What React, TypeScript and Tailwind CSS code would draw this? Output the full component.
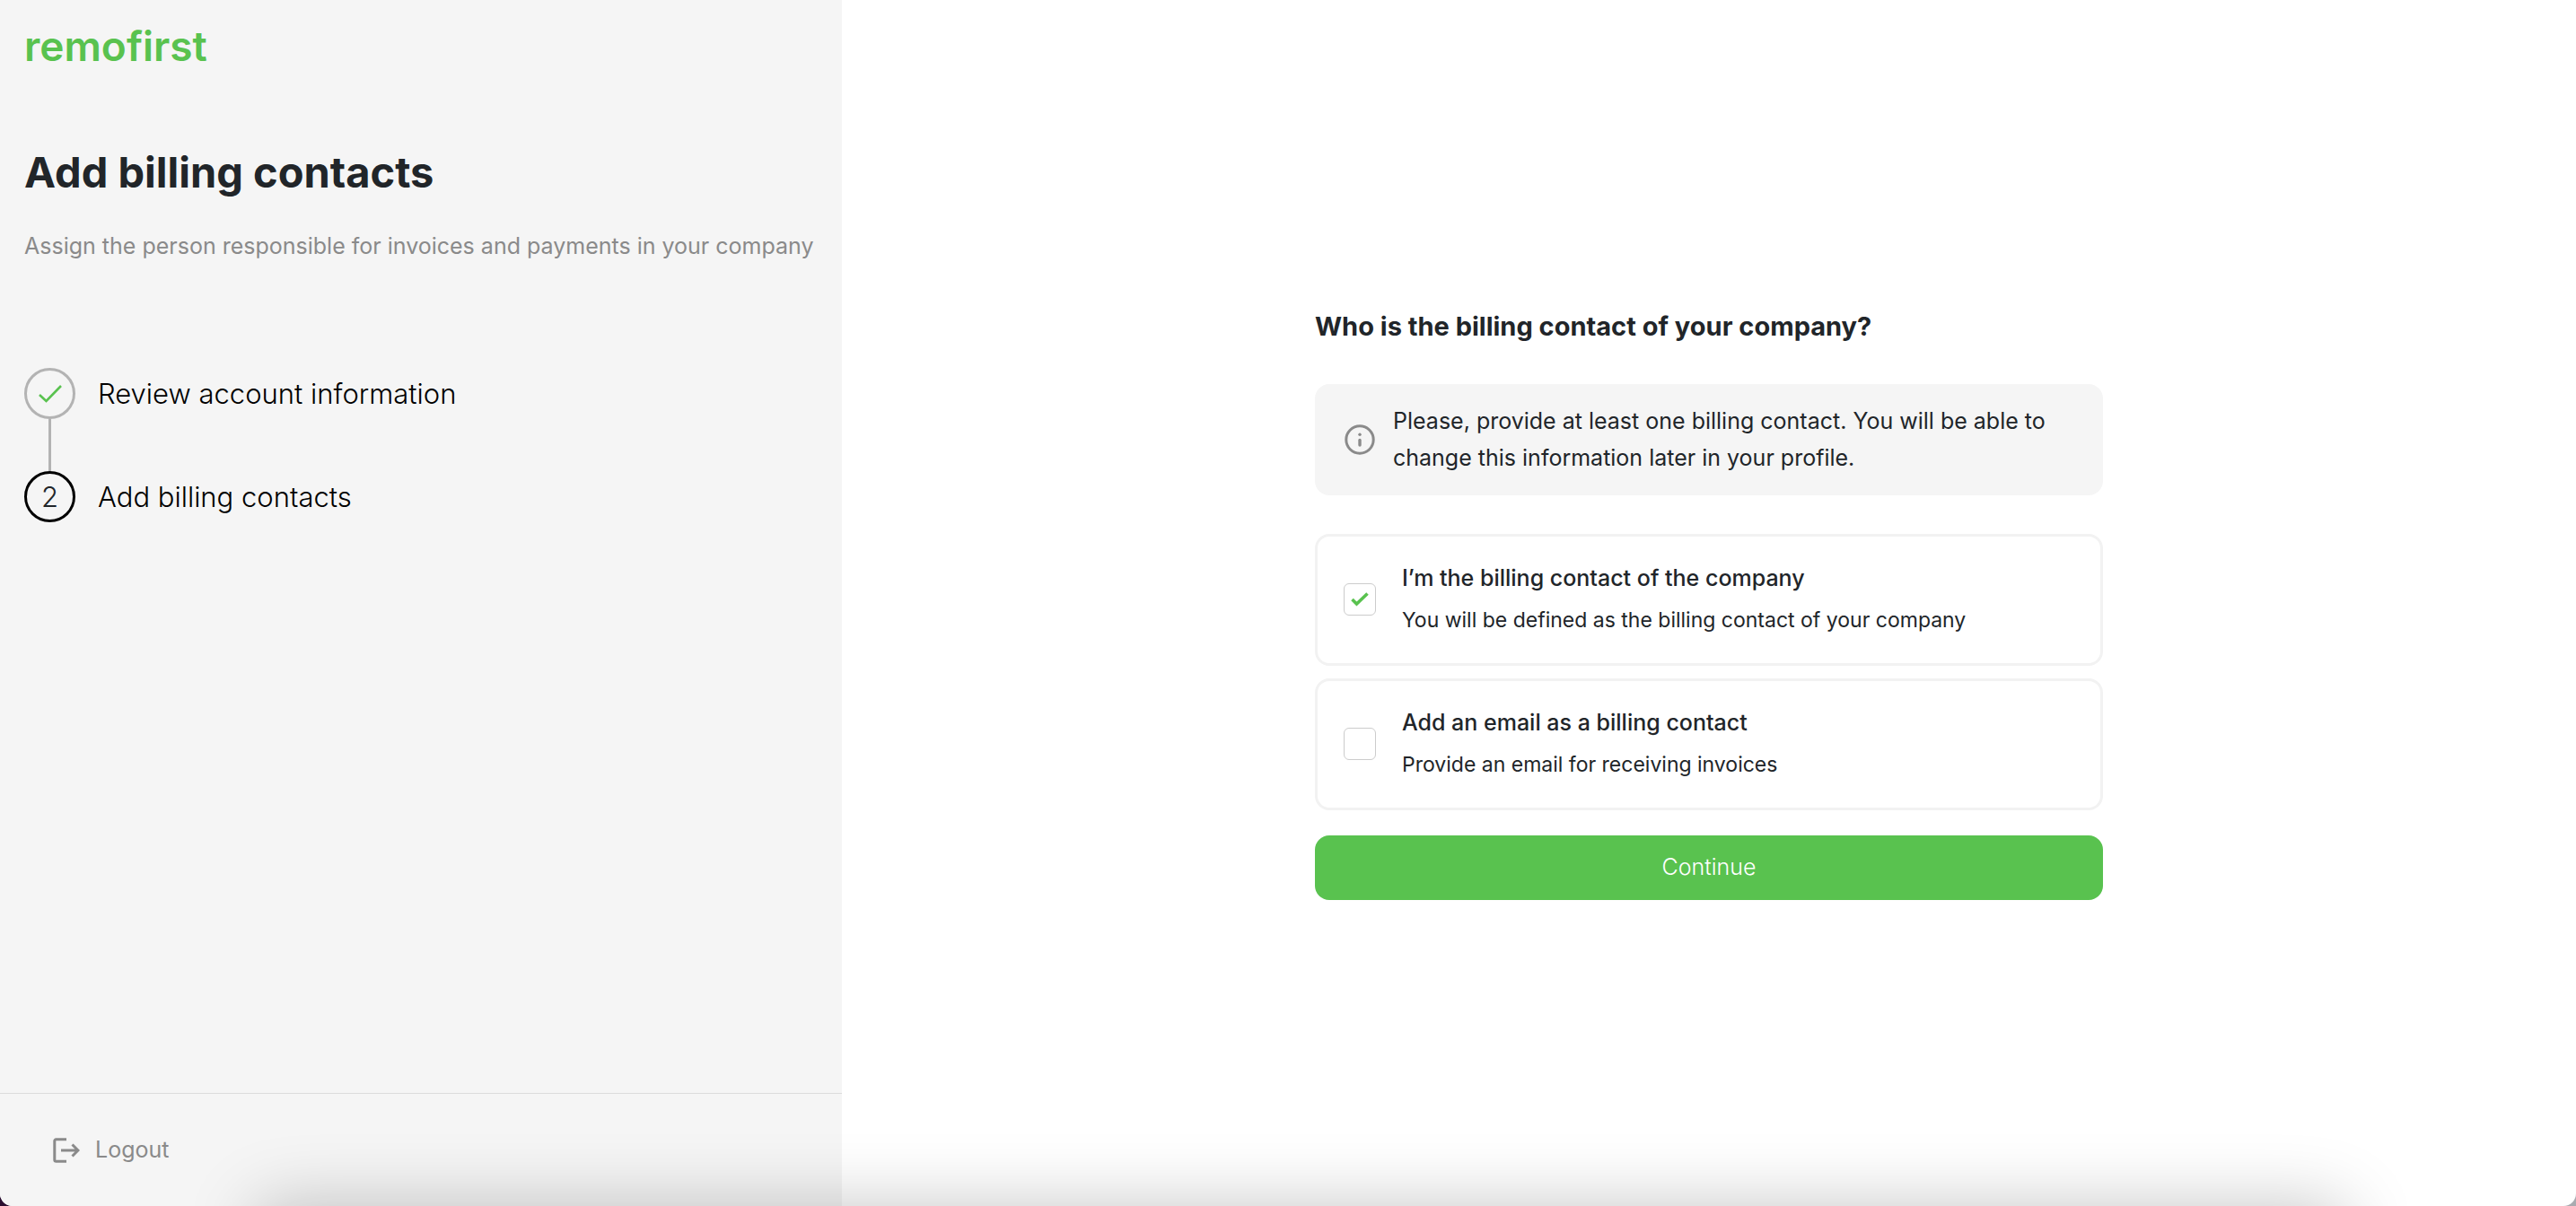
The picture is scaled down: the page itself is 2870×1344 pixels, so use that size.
import { useState } from 'react';

const steps = [
  { title: 'Review account information', done: true },
  { title: 'Add billing contacts', done: false },
];

const options = [
  {
    id: 'self',
    title: 'I’m the billing contact of the company',
    description: 'You will be defined as the billing contact of your company',
  },
  {
    id: 'email',
    title: 'Add an email as a billing contact',
    description: 'Provide an email for receiving invoices',
  },
];

function InfoIcon() {
  return (
    <svg viewBox="0 0 34 34" className="size-[34px] shrink-0 text-[#8a8a8a]" fill="none" stroke="currentColor">
      <circle cx="17" cy="17" r="15.2" strokeWidth="3" />
      <path d="M17 17.500v5.500" strokeWidth="3.4" strokeLinecap="round" />
      <circle cx="17" cy="11.300" r="1.7" fill="currentColor" stroke="none" />
    </svg>
  );
}

function LogoutIcon() {
  return (
    <svg viewBox="0 0 30 28" className="h-7 w-[30px]" fill="none" stroke="currentColor" strokeWidth="3">
      <path d="M15 1.800H3.500a1.700 1.700 0 0 0-1.700 1.700v21a1.700 1.700 0 0 0 1.700 1.700H15" />
      <path d="M9 14h19M21.500 7.500l6.500 6.500-6.500 6.500" />
    </svg>
  );
}

export default function App() {
  const [selected, setSelected] = useState('self');

  return (
    <div className="bg-linear-to-r from-[#2b0f30] to-[#a9abb0]">
      <div className="relative flex min-h-screen overflow-hidden rounded-b-[14px] bg-white font-['Inter',sans-serif] text-[#212529]">
        {/* Sidebar */}
        <aside className="flex w-[938px] shrink-0 flex-col bg-[#f5f5f5]">
          <div className="flex-1 px-[27px] pt-[21px]">
            <a href="#" className="block text-[46px] leading-[60px] font-semibold text-[#59c24f]">
              remofirst
            </a>
            <h1 className="mt-[79px] text-[47px] leading-[64px] font-bold">Add billing contacts</h1>
            <p className="mt-[30px] text-[25px] leading-[40px] text-[#8a8a8a]">
              Assign the person responsible for invoices and payments in your company
            </p>

            <ol className="mt-[116px]">
              {steps.map((step, index) => (
                <li key={step.title}>
                  {index > 0 && <div className="ml-[27px] h-[58px] w-[3px] bg-[#b3b3b3]" />}
                  <div className="flex items-center gap-[25px]">
                    <span
                      className={
                        step.done
                          ? 'flex size-[57px] items-center justify-center rounded-full border-3 border-[#b3b3b3]'
                          : 'flex size-[57px] items-center justify-center rounded-full border-3 border-black text-[31px] leading-none font-light'
                      }
                    >
                      {step.done ? (
                        <svg viewBox="0 0 26 20" className="h-5 w-[26px]" fill="none" stroke="#59c24f" strokeWidth="2.6">
                          <path d="M1 11l7.500 7L25 1" />
                        </svg>
                      ) : (
                        index + 1
                      )}
                    </span>
                    <span className="text-[31px] leading-[40px] font-light text-black">{step.title}</span>
                  </div>
                </li>
              ))}
            </ol>
          </div>

          <div className="border-t border-[#dcdcdc] px-[59px] py-[42px]">
            <button type="button" className="flex h-[41px] items-center gap-[17px] text-[25px] text-[#8a8a8a]">
              <LogoutIcon />
              Logout
            </button>
          </div>
        </aside>

        {/* Billing contact form */}
        <main className="flex flex-1 items-center justify-center">
          <form className="w-[878px]" onSubmit={(e) => e.preventDefault()}>
            <h2 className="text-[29px] leading-[44px] font-bold">Who is the billing contact of your company?</h2>

            <div className="mt-[42px] flex items-center gap-5 rounded-2xl bg-[#f5f5f5] px-[33px] py-[21px]">
              <InfoIcon />
              <p className="text-[25px] leading-[41px]">
                Please, provide at least one billing contact. You will be able to change this information later in your
                profile.
              </p>
            </div>

            <div className="mt-[43px] flex flex-col gap-[14px]">
              {options.map((option) => (
                <label
                  key={option.id}
                  className="flex h-[147px] items-center gap-[29px] rounded-2xl border-3 border-[#f2f2f2] px-[29px]"
                >
                  <span className="grid place-items-center">
                    <input
                      type="checkbox"
                      checked={selected === option.id}
                      onChange={() => setSelected(option.id)}
                      className="peer col-start-1 row-start-1 size-9 appearance-none rounded-md border border-[#cccccc]"
                    />
                    <svg
                      viewBox="0 0 20 16"
                      className="pointer-events-none invisible col-start-1 row-start-1 h-4 w-5 peer-checked:visible"
                      fill="none"
                      stroke="#59c24f"
                      strokeWidth="3.6"
                    >
                      <path d="M1.500 8l5 5L18.500 1.500" />
                    </svg>
                  </span>
                  <span>
                    <span className="block text-[25px] leading-[46px] font-medium">{option.title}</span>
                    <span className="block text-[23px] leading-[48px]">{option.description}</span>
                  </span>
                </label>
              ))}
            </div>

            <button
              type="submit"
              className="mt-7 h-[72px] w-full rounded-2xl bg-[#59c24f] text-[25px] font-light text-white"
            >
              Continue
            </button>
          </form>
        </main>

        {/* Soft shade along the bottom edge */}
        <div className="pointer-events-none absolute top-full right-[9%] left-[10%] h-40 shadow-[0_0_80px_rgba(0,0,0,0.23)]" />
      </div>
    </div>
  );
}
